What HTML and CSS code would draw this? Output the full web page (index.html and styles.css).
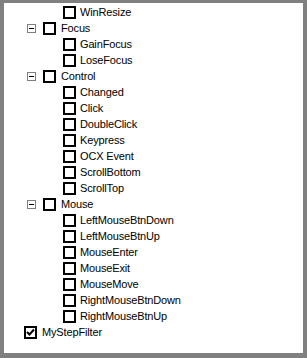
FILE: index.html
```html
<!DOCTYPE html>
<html>
<head>
<meta charset="utf-8">
<link rel="stylesheet" href="styles.css">
</head>
<body>
<div class="tree">
  <div class="row lvl2"><span class="cb"></span><span class="label">WinResize</span></div>
  <div class="row lvl1"><span class="exp"><span class="minus"></span></span><span class="cb"></span><span class="label">Focus</span></div>
  <div class="row lvl2"><span class="cb"></span><span class="label">GainFocus</span></div>
  <div class="row lvl2"><span class="cb"></span><span class="label">LoseFocus</span></div>
  <div class="row lvl1"><span class="exp"><span class="minus"></span></span><span class="cb"></span><span class="label">Control</span></div>
  <div class="row lvl2"><span class="cb"></span><span class="label">Changed</span></div>
  <div class="row lvl2"><span class="cb"></span><span class="label">Click</span></div>
  <div class="row lvl2"><span class="cb"></span><span class="label">DoubleClick</span></div>
  <div class="row lvl2"><span class="cb"></span><span class="label">Keypress</span></div>
  <div class="row lvl2"><span class="cb"></span><span class="label">OCX Event</span></div>
  <div class="row lvl2"><span class="cb"></span><span class="label">ScrollBottom</span></div>
  <div class="row lvl2"><span class="cb"></span><span class="label">ScrollTop</span></div>
  <div class="row lvl1"><span class="exp"><span class="minus"></span></span><span class="cb"></span><span class="label">Mouse</span></div>
  <div class="row lvl2"><span class="cb"></span><span class="label">LeftMouseBtnDown</span></div>
  <div class="row lvl2"><span class="cb"></span><span class="label">LeftMouseBtnUp</span></div>
  <div class="row lvl2"><span class="cb"></span><span class="label">MouseEnter</span></div>
  <div class="row lvl2"><span class="cb"></span><span class="label">MouseExit</span></div>
  <div class="row lvl2"><span class="cb"></span><span class="label">MouseMove</span></div>
  <div class="row lvl2"><span class="cb"></span><span class="label">RightMouseBtnDown</span></div>
  <div class="row lvl2"><span class="cb"></span><span class="label">RightMouseBtnUp</span></div>
  <div class="row lvl0"><span class="cb checked"><svg width="9" height="9" viewBox="0 0 9 9"><polyline points="1,4 3.5,6.5 8,1.5" fill="none" stroke="#000" stroke-width="2"/></svg></span><span class="label">MyStepFilter</span></div>
</div>
</body>
</html>
```
FILE: styles.css
```css
html, body {
  margin: 0;
  padding: 0;
  background: #808080;
}
.tree {
  box-sizing: border-box;
  width: 307px;
  height: 358px;
  background: #fff;
  border-style: solid;
  border-color: #808080;
  border-width: 3px 4px 5px 4px;
  padding-top: 1px;
  font-family: "Liberation Sans", Arial, sans-serif;
  font-size: 11px;
  letter-spacing: -0.15px;
  color: #000;
  overflow: hidden;
}
.row {
  display: flex;
  align-items: center;
  height: 16px;
  white-space: nowrap;
}
.lvl0 { padding-left: 20px; }
.lvl1 { padding-left: 23px; }
.lvl2 { padding-left: 59px; }
.exp {
  box-sizing: border-box;
  width: 9px;
  height: 9px;
  border: 1px solid #808080;
  background: #fff;
  margin-right: 7px;
  display: flex;
  align-items: center;
  justify-content: center;
}
.minus {
  width: 5px;
  height: 1px;
  background: #000;
}
.cb {
  box-sizing: border-box;
  width: 13px;
  height: 13px;
  border: 2px solid #000;
  background: #fff;
  display: flex;
  align-items: center;
  justify-content: center;
  flex: none;
}
.cb svg { display: block; }
.label {
  margin-left: 4px;
  line-height: 16px;
}
.lvl1 .label { margin-left: 5px; }
.lvl0 .label { margin-left: 5px; }
```
